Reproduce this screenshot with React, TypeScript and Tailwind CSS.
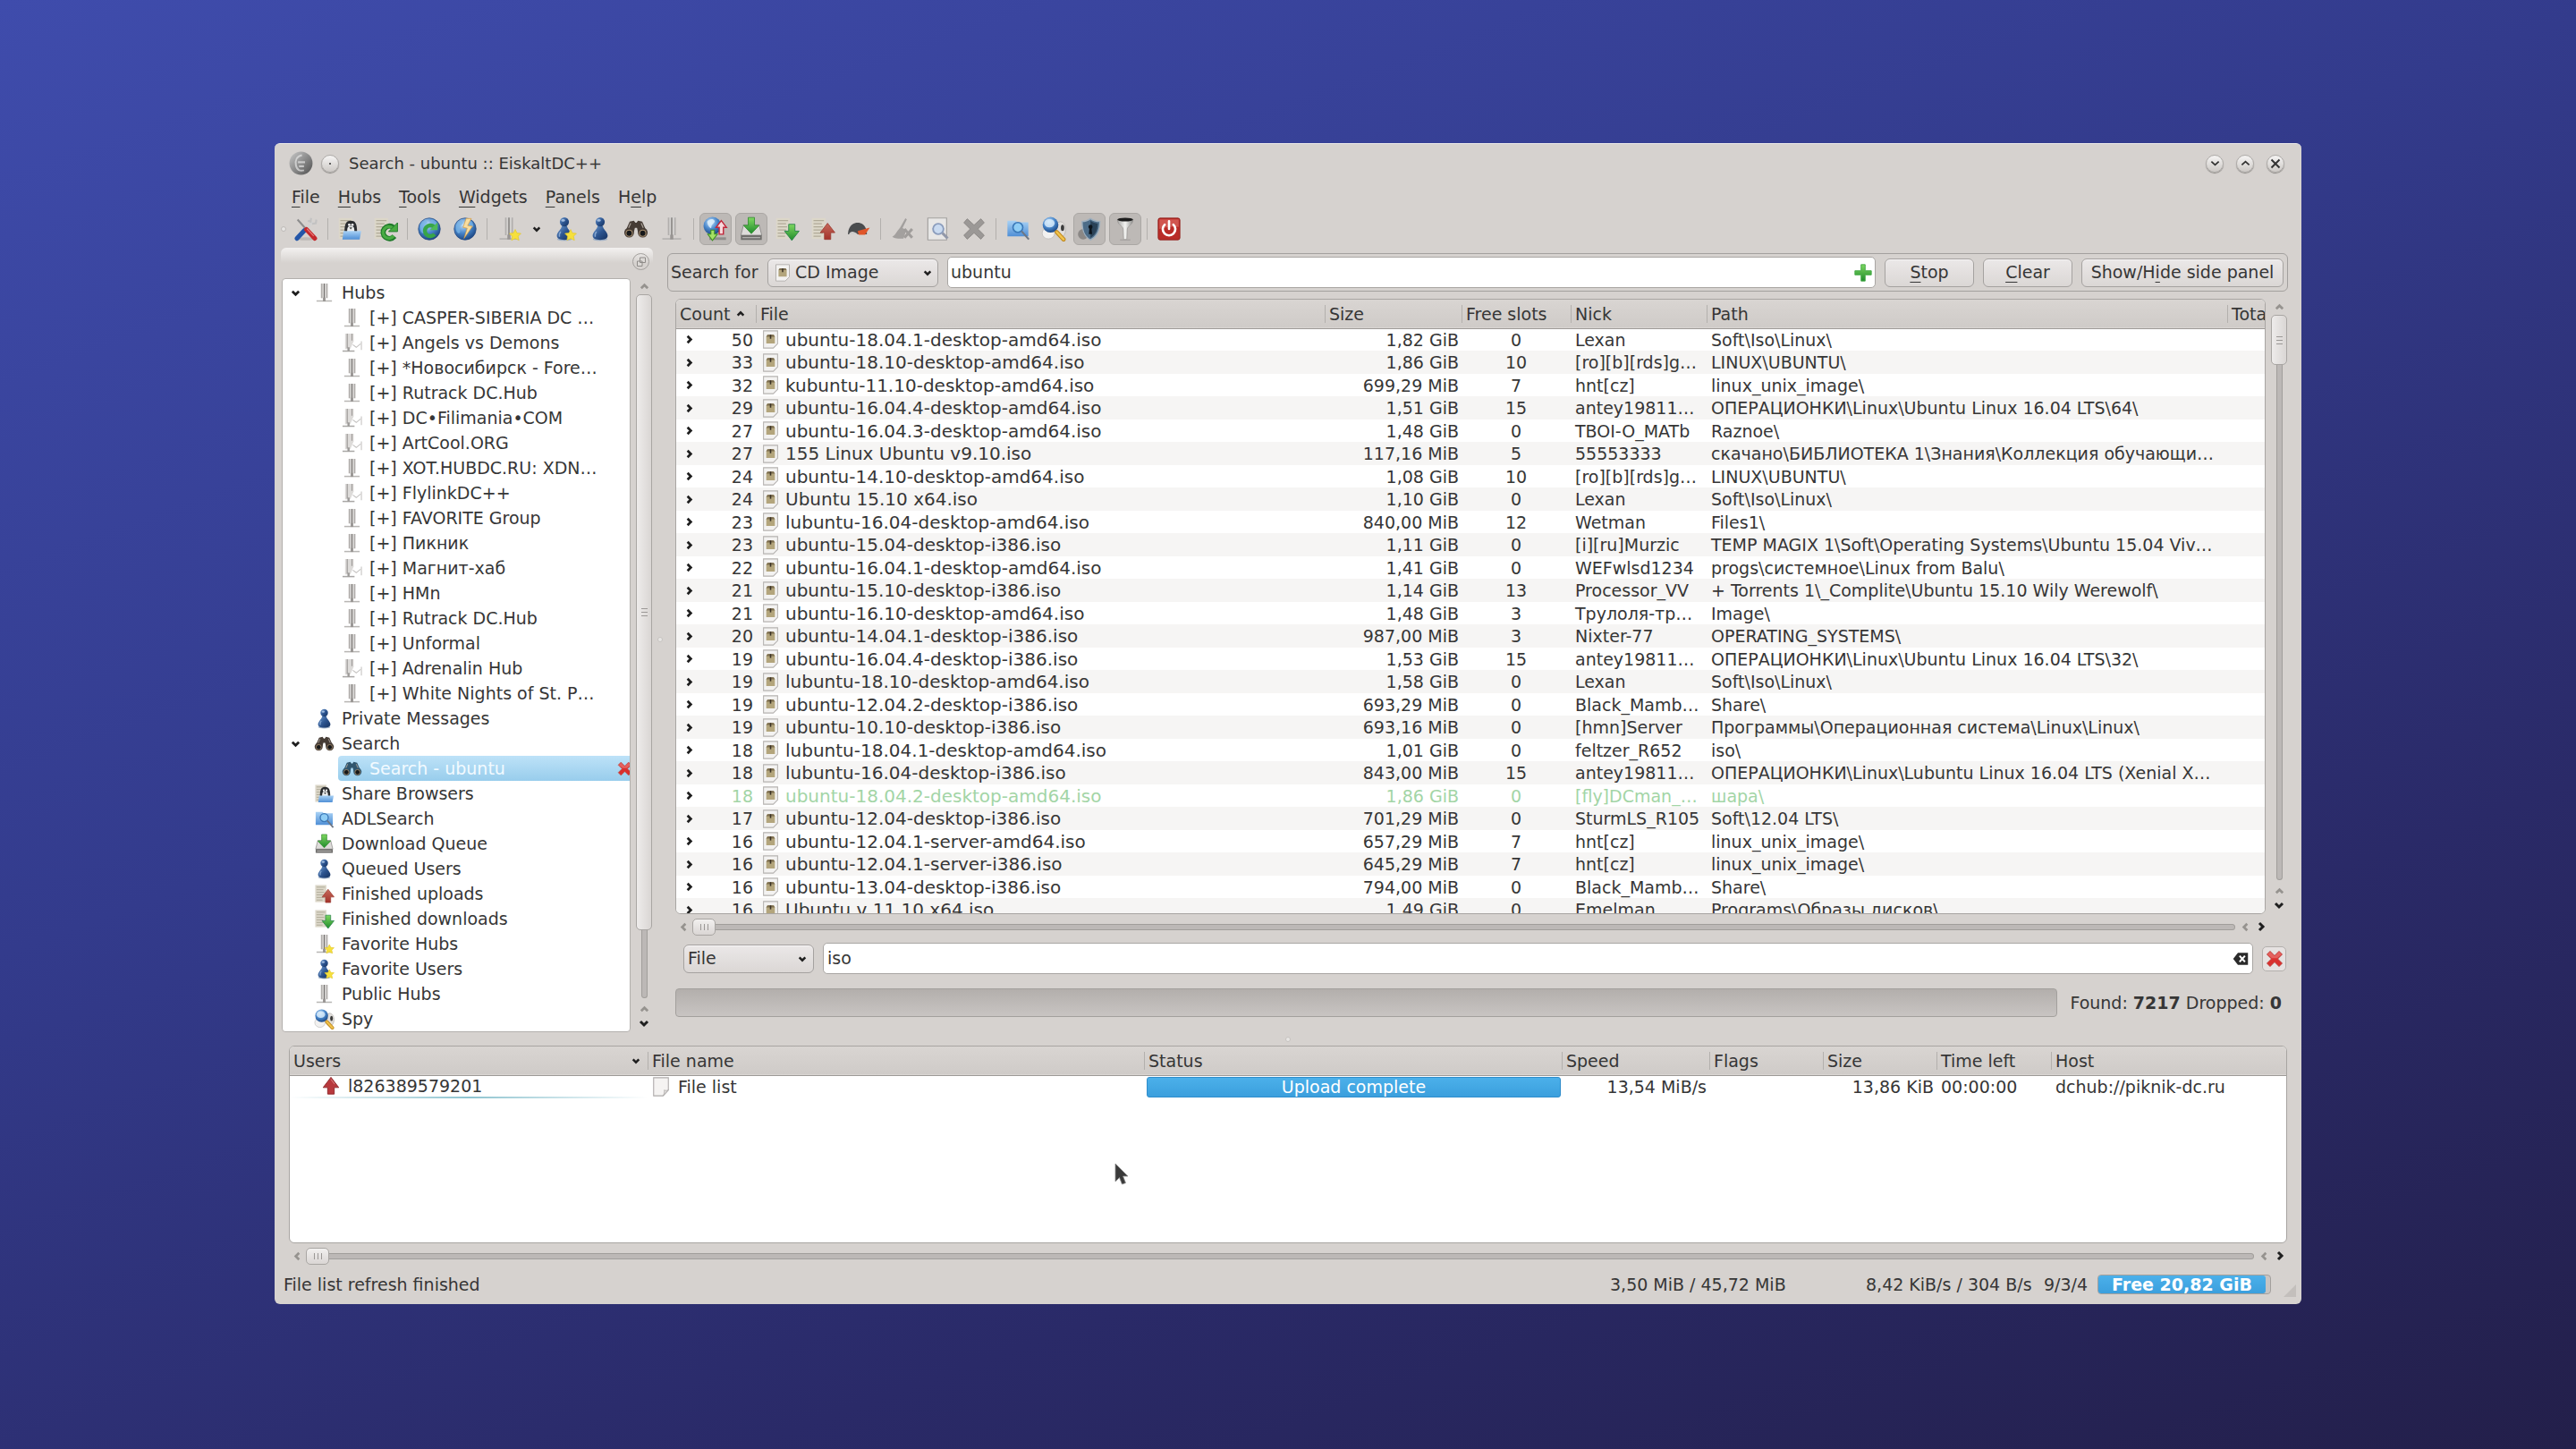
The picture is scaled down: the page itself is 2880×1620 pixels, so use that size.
import type { ReactNode } from 'react'

type IconProps = { className?: string }

function Svg({ className = 'size-[28px]', children }: { className?: string; children: ReactNode }) {
  return (
    <svg viewBox="0 0 24 24" fill="none" aria-hidden="true" className={`shrink-0 ${className}`}>
      {children}
    </svg>
  )
}

// Gradients shared by all icons
function IconDefs() {
  return (
    <svg width="0" height="0" className="absolute" aria-hidden="true">
      <defs>
        <radialGradient id="globe" cx="0.4" cy="0.3" r="0.75">
          <stop offset="0" stopColor="#c4e2fa" />
          <stop offset="0.5" stopColor="#4a88cc" />
          <stop offset="1" stopColor="#16407c" />
        </radialGradient>
        <linearGradient id="pawn" x1="0" y1="0" x2="1" y2="1">
          <stop offset="0" stopColor="#6f9bd0" />
          <stop offset="0.5" stopColor="#2d5590" />
          <stop offset="1" stopColor="#14305f" />
        </linearGradient>
        <linearGradient id="green" x1="0" y1="0" x2="0" y2="1">
          <stop offset="0" stopColor="#7fd860" />
          <stop offset="1" stopColor="#1f8a2c" />
        </linearGradient>
        <linearGradient id="red" x1="0" y1="0" x2="0" y2="1">
          <stop offset="0" stopColor="#c66a5c" />
          <stop offset="1" stopColor="#a3322a" />
        </linearGradient>
        <linearGradient id="steel" x1="0" y1="0" x2="1" y2="0">
          <stop offset="0" stopColor="#a4a4a2" />
          <stop offset="0.5" stopColor="#f4f4f2" />
          <stop offset="1" stopColor="#8c8c8a" />
        </linearGradient>
        <linearGradient id="folder" x1="0" y1="0" x2="0" y2="1">
          <stop offset="0" stopColor="#a9d2f5" />
          <stop offset="1" stopColor="#4f8fd6" />
        </linearGradient>
        <linearGradient id="ball" x1="0" y1="0" x2="1" y2="1">
          <stop offset="0" stopColor="#c9c9c9" />
          <stop offset="1" stopColor="#4e4e4e" />
        </linearGradient>
      </defs>
    </svg>
  )
}

const Star = () => (
  <path d="M18 12.5l1.7 3.4 3.8.4-2.7 2.7.8 3.8-3.6-1.6-3.5 1.6.6-3.8-2.6-2.7 3.8-.4z" fill="#f6e03c" stroke="#e3c72e" strokeWidth=".6" />
)

const Sheet = () => (
  <>
    <path d="M1.5 1.5h13v20h-13z" fill="#dcd7c9" />
    <path d="M3 4h10M3 7h8M3 10h9M3 13h8M3 16h9M3 19h7" stroke="#b0aa98" strokeWidth="1" />
  </>
)

const ToolsIcon = (p: IconProps) => (
  <Svg {...p}>
    <ellipse cx="12" cy="21.5" rx="9" ry="1.5" fill="#bdb9b6" />
    <path d="M4 3l9 10" stroke="#8d8d8d" strokeWidth="1.8" />
    <path d="M18.5 5L10 15" stroke="#d2d2d2" strokeWidth="2.6" />
    <path d="M14 4l2.5 1L17 1.5M18 7l3.5-.5L22 3" stroke="#c2c2c2" strokeWidth="1.8" />
    <path d="M10.5 13.5L3.5 21" stroke="#2456a8" strokeWidth="4.4" strokeLinecap="round" />
    <path d="M12.5 12.5L20.5 21" stroke="#c4282c" strokeWidth="4.4" strokeLinecap="round" />
    <path d="M13 11.8l6.5 7" stroke="#ea7a78" strokeWidth="1" />
  </Svg>
)

const ShareIcon = (p: IconProps) => (
  <Svg {...p}>
    <Sheet />
    <path d="M7 15c0-7 1-11 6-11s6 4 6 11z" fill="#2b2d30" />
    <path d="M9.5 15c0-5 1-6 3.5-6s3.5 1 3.5 6z" fill="#eceeee" />
    <circle cx="11.5" cy="8" r="1.2" fill="#fff" />
    <circle cx="14.6" cy="8" r="1.2" fill="#fff" />
    <path d="M11.5 10.5h3l-1.5 2z" fill="#444" />
    <path d="M6 14h17l-1.5 8H5z" fill="url(#folder)" />
  </Svg>
)

const RefreshShareIcon = (p: IconProps) => (
  <Svg {...p}>
    <Sheet />
    <path d="M20.5 19a6 6 0 1 1-1-8.5" stroke="#1f7a2a" strokeWidth="5" />
    <path d="M19.8 18.6a5.6 5.6 0 1 1-.8-7.4" stroke="#48ab42" strokeWidth="2.8" />
    <path d="M23.5 6v8.5H15z" fill="#48ab42" stroke="#1f7a2a" strokeWidth=".8" />
  </Svg>
)

const GlobeBase = () => (
  <>
    <circle cx="12" cy="12" r="10.5" fill="url(#globe)" stroke="#27497f" strokeWidth=".6" />
    <path d="M4 7c3-4 6-3 6-1s-3 2-3 5 1 5-1 5-4-5-2-9zM14 3c4 0 6 4 6 6s-4 1-5-1-2-4-1-5z" fill="#79b4e6" opacity=".75" />
  </>
)

const GlobeRefreshIcon = (p: IconProps) => (
  <Svg {...p}>
    <GlobeBase />
    <path d="M17 17a5.2 5.2 0 1 1-.4-7" stroke="#37a548" strokeWidth="3.8" />
    <path d="M20 5.5V13h-7.500z" fill="#4fb95a" />
  </Svg>
)

const GlobeBoltIcon = (p: IconProps) => (
  <Svg {...p}>
    <GlobeBase />
    <path d="M13 2l-3 8.5 4 .8L11 21l8-11.5-4.600-.8L18 2z" fill="#f7dda0" stroke="#d89c40" strokeWidth=".6" />
  </Svg>
)

const TowerBase = () => (
  <>
    <path d="M3 21.5h18" stroke="#b8b6b4" strokeWidth="1.6" />
    <path d="M8 1h8v17H8z" fill="#d4d2d0" />
    <path d="M9 1v17M15.2 1v17" stroke="#b2afad" strokeWidth="1.4" />
    <path d="M12 1v17" stroke="#757270" strokeWidth="1.1" />
    <path d="M12 17.500v4.500" stroke="#989593" strokeWidth="3" />
  </>
)

const TowerIcon = (p: IconProps) => (
  <Svg {...p}>
    <TowerBase />
  </Svg>
)

const TowerStarIcon = (p: IconProps) => (
  <Svg {...p}>
    <TowerBase />
    <Star />
  </Svg>
)

const TowerSignalIcon = (p: IconProps) => (
  <Svg {...p}>
    <path d="M4 1h10v9l-4 9H4z" fill="#dddbd9" />
    <path d="M6.5 1v17M12 1v8" stroke="#a19e9c" strokeWidth="1.3" />
    <path d="M1 21.5h14" stroke="#a9a7a5" strokeWidth="1.6" />
    <path d="M8 17v4.500" stroke="#9c9a98" strokeWidth="2.5" />
    <path d="M23 10v10M22 13l-5 4-4-3" stroke="#c4c2c0" strokeWidth="1.1" />
  </Svg>
)

const PawnBase = () => (
  <>
    <ellipse cx="12" cy="21.8" rx="7" ry="1.6" fill="#9fb0c6" />
    <path d="M9.5 9h5c0 3 4.7 6 4.700 9.500 0 2.600-2.700 4-7.200 4s-7.200-1.400-7.200-4C4.800 15 9.500 12 9.500 9z" fill="url(#pawn)" />
    <circle cx="12" cy="5.200" r="4.400" fill="url(#pawn)" />
    <ellipse cx="10.800" cy="3.800" rx="1.800" ry="1.200" fill="#b8d0ee" opacity=".8" />
    <path d="M8.500 14.500c-1.300 1.500-1.700 3-1.200 5" stroke="#86a7d2" strokeWidth="1.200" />
  </>
)

const PawnIcon = (p: IconProps) => (
  <Svg {...p}>
    <PawnBase />
  </Svg>
)

const PawnStarIcon = (p: IconProps) => (
  <Svg {...p}>
    <PawnBase />
    <Star />
  </Svg>
)

const BinocularsIcon = ({ className, tint = '#463c35' }: IconProps & { tint?: string }) => (
  <Svg className={className}>
    <path d="M6 5l4-1 1.500 2h1L14 4l4 1 4.500 10H14l-1-4h-2l-1 4H1.500z" fill={tint} />
    <circle cx="5.500" cy="15.500" r="4.700" fill={tint} />
    <circle cx="18.500" cy="15.500" r="4.700" fill={tint} />
    <circle cx="5.500" cy="16" r="3" fill="#16181a" stroke="#a58c6c" strokeWidth=".9" />
    <circle cx="18.500" cy="16" r="3" fill="#16181a" stroke="#a58c6c" strokeWidth=".9" />
    <path d="M7 6.500L5 11M17 6.500l2 4.500" stroke="#a8a098" strokeWidth="1" />
  </Svg>
)

const TransfersIcon = (p: IconProps) => (
  <Svg {...p}>
    <path d="M6 20h16v2.500H6z" fill="#8f8d8b" />
    <circle cx="9" cy="9" r="8.500" fill="url(#globe)" />
    <path d="M4 5c2-3 6-3 7-1s-3 3-3 6-4-1-4-5z" fill="#e0f1fc" opacity=".85" />
    <path d="M17.500 4l5 6.500h-3V17h-4v-6.500h-3z" fill="#f6d9dc" stroke="#c2263a" strokeWidth="1.200" />
    <path d="M7.500 13H11v4h2.800L9 23l-4.500-6h3z" fill="#a6e065" stroke="#3f8f22" strokeWidth=".9" />
  </Svg>
)

const DownloadIcon = (p: IconProps) => (
  <Svg {...p}>
    <path d="M4.500 8h15L22 18H2z" fill="#dedcda" stroke="#8e8c8a" strokeWidth=".8" />
    <path d="M2 18h20v4.500H2z" fill="#6f6e6c" />
    <path d="M3.500 20.300h17" stroke="#b9b7b5" strokeWidth="1" />
    <path d="M9 1h6v7.500h4.500L12 16.500 4.500 8.500H9z" fill="url(#green)" stroke="#2f8a2c" strokeWidth=".7" />
  </Svg>
)

const FinishedDownIcon = (p: IconProps) => (
  <Svg {...p}>
    <Sheet />
    <path d="M13.500 7.500h6V14h4L16.500 23 9.500 14h4z" fill="url(#green)" stroke="#1e7a45" strokeWidth=".7" />
  </Svg>
)

const FinishedUpIcon = (p: IconProps) => (
  <Svg {...p}>
    <Sheet />
    <path d="M16.500 6.500l7 9h-4V22h-6v-6.500h-4z" fill="url(#red)" stroke="#9a3a30" strokeWidth=".7" />
  </Svg>
)

const UploadIcon = (p: IconProps) => (
  <Svg {...p}>
    <path d="M12 1.500L21.500 14H16v8H8v-8H2.500z" fill="#b8393d" stroke="#8c2529" strokeWidth="1" />
    <path d="M12 4l4.500 6" stroke="#e08a8a" strokeWidth="1" />
  </Svg>
)

const GaugeIcon = (p: IconProps) => (
  <Svg {...p}>
    <path d="M1 17.500C1 10 5.500 5.500 11 5.500s9.500 4.500 9.500 12z" fill="#4a4c4e" />
    <path d="M2 17.500c1.500-3.500 5-3.500 9 0z" fill="#cfcdcb" />
    <path d="M23.500 10.500L11 14l1 4h6.500z" fill="#e0562a" />
  </Svg>
)

const BroomIcon = (p: IconProps) => (
  <Svg {...p}>
    <path d="M15 1l1.500 1-4.500 9 4 2-3 9C8 22 3 21.500 1.500 20 5 18 7 13 9.500 10.500z" fill="#a3a09e" />
    <path d="M14 12l8 9M22 12l-8 9" stroke="#a09d9b" strokeWidth="2.800" />
  </Svg>
)

const PageFindIcon = (p: IconProps) => (
  <Svg {...p}>
    <path d="M2 1.500h18v21H2z" fill="#e8e7e6" stroke="#a3a19f" strokeWidth="1" />
    <circle cx="12" cy="12" r="5" fill="#c9daf0" stroke="#8a9cbc" strokeWidth="1.600" />
    <path d="M16 16l5 5" stroke="#9298a8" strokeWidth="2.600" />
  </Svg>
)

const GrayCrossIcon = (p: IconProps) => (
  <Svg {...p}>
    <path d="M5 1.500L12 8l7-6.500 3.500 4L16 12l6.500 6.500-3.500 4-7-6.500-7 6.500-3.500-4L8 12 1.500 5.500z" fill="#9b9896" stroke="#868381" strokeWidth=".8" />
  </Svg>
)

const FolderFindIcon = (p: IconProps) => (
  <Svg {...p}>
    <path d="M2 4h8l1.500 1.500H22V19H2z" fill="url(#folder)" />
    <circle cx="12" cy="10.500" r="4.700" fill="#8fcdf5" stroke="#3a78b8" strokeWidth="1.400" />
    <path d="M15.500 14l7 8" stroke="#6d7684" strokeWidth="1.800" />
  </Svg>
)

const SpyIcon = (p: IconProps) => (
  <Svg {...p}>
    <ellipse cx="7" cy="16" rx="6" ry="5.500" fill="#f2f1f0" stroke="#bfbdbb" strokeWidth=".7" />
    <ellipse cx="18.500" cy="12.500" rx="5" ry="7.500" fill="#e2dfdc" stroke="#b6b3b0" strokeWidth=".7" />
    <ellipse cx="20.500" cy="11" rx="1.600" ry="3" fill="#3b3b3b" />
    <circle cx="9" cy="8" r="7.500" fill="url(#globe)" />
    <ellipse cx="8" cy="6.500" rx="5" ry="4" fill="#dceefb" opacity=".8" />
    <path d="M15 15l6.500 7" stroke="#c08a1e" strokeWidth="4" strokeLinecap="round" />
    <path d="M15 15l6.500 7" stroke="#f1c34c" strokeWidth="2.200" strokeLinecap="round" />
  </Svg>
)

const ShieldIcon = (p: IconProps) => (
  <Svg {...p}>
    <ellipse cx="6" cy="17" rx="5" ry="5" fill="#8b8886" />
    <path d="M13 2c2.500 2 5.500 2.800 9 2.800C22 13 20 19 13 22.500 6.500 19 5 13 5 4.800c3 0 5.500-.8 8-2.800z" fill="#4c6c88" stroke="#9fb0bf" strokeWidth="1.200" />
    <path d="M13 4v16.500c5-3 6.700-7.500 6.900-13.700C17.500 6.500 15 5.500 13 4z" fill="#2a4258" />
    <circle cx="13" cy="10" r="2" fill="#0d151d" />
    <path d="M12 11h2l.6 6h-3.200z" fill="#0d151d" />
  </Svg>
)

const FunnelIcon = (p: IconProps) => (
  <Svg {...p}>
    <path d="M4.500 3h15c0 5-5.200 6-5.500 9l-.5 10h-3L10 12c-.3-3-5.500-4-5.500-9z" fill="url(#steel)" stroke="#8f8c8a" strokeWidth=".5" />
    <ellipse cx="12" cy="3" rx="7.500" ry="1.800" fill="#1c1c1c" />
    <path d="M7 22.500h10" stroke="#a4a19f" strokeWidth="1" />
  </Svg>
)

const PowerIcon = (p: IconProps) => (
  <Svg {...p}>
    <rect x=".8" y=".8" width="22.400" height="22.400" rx="2" fill="#b92b27" stroke="#8e1d1a" strokeWidth=".8" />
    <path d="M2 2h20v8C15 9 8 10 2 12z" fill="#dc6a62" opacity=".7" />
    <path d="M7.500 7.500a6.500 6.500 0 1 0 9 0M12 4v8" stroke="#fff" strokeWidth="2.400" strokeLinecap="round" />
  </Svg>
)

const CdFileIcon = (p: IconProps) => (
  <Svg {...p}>
    <path d="M3 1h18v16.500L15.500 23H3z" fill="#f3f2f1" stroke="#b5b2b0" strokeWidth="1.200" />
    <path d="M6.500 8.500L8 6h8l1.500 2.500V17h-11z" fill="#b3a57c" />
    <path d="M6.500 8.500L8 6h8l1.500 2.500z" fill="#7d6e4f" />
    <path d="M12 6v5" stroke="#3a3226" strokeWidth="1.800" />
  </Svg>
)

const BlankFileIcon = (p: IconProps) => (
  <Svg {...p}>
    <path d="M3 1h18v15l-6.500 7H3z" fill="#f5f3f2" stroke="#aeabaa" strokeWidth="1.200" />
    <path d="M21 16c-2 1-4 .5-5 0 0 3 0 5-1.500 7z" fill="#dedbd9" stroke="#aeabaa" strokeWidth=".8" />
  </Svg>
)

const RedCrossIcon = (p: IconProps) => (
  <Svg {...p}>
    <path d="M6 1.500l6 6 6-6L22.500 6l-6 6 6 6-4.500 4.500-6-6-6 6L1.500 18l6-6-6-6z" fill="#d9302e" stroke="#b06a66" strokeWidth=".8" />
    <path d="M6 2.500l6 6 6-6L21.500 6l-6 5h-7l-6-5z" fill="#ec8a86" opacity=".55" />
  </Svg>
)

const PlusIcon = (p: IconProps) => (
  <Svg {...p}>
    <path d="M9.500 2h5v7.500H22v5h-7.500V22h-5v-7.500H2v-5h7.500z" fill="url(#green)" stroke="#43aa45" strokeWidth="1" strokeLinejoin="round" />
  </Svg>
)

const ClearTextIcon = (p: IconProps) => (
  <Svg {...p}>
    <path d="M1 12l7-9h15v18H8z" fill="#2a2a2a" />
    <path d="M10.500 7.500l8 9M18.500 7.500l-8 9" stroke="#fff" strokeWidth="2.800" />
  </Svg>
)

const chevrons = {
  up: 'M4 16l8-8 8 8',
  down: 'M4 8l8 8 8-8',
  left: 'M16 4l-8 8 8 8',
  right: 'M8 4l8 8-8 8',
}

function Chevron({ dir, className = 'size-[12px] text-[#1f1f1f]' }: { dir: keyof typeof chevrons; className?: string }) {
  return (
    <Svg className={className}>
      <path d={chevrons[dir]} stroke="currentColor" strokeWidth="6" />
    </Svg>
  )
}

const dimArrow = 'size-[11px] text-[#96938f]'
const darkArrow = 'size-[12px] text-[#1f1f1f]'

function VScroll({ label, handle }: { label: string; handle: string }) {
  return (
    <div role="group" aria-label={label} className="flex w-[18px] shrink-0 flex-col items-center">
      <button type="button" aria-label="Up" className="flex h-[18px] items-center"><Chevron dir="up" className={dimArrow} /></button>
      <div className={`flex w-[18px] shrink-0 flex-col items-center justify-center gap-[3px] rounded-[5px] border border-[#a9a6a3] bg-gradient-to-r from-[#eeeceb] to-[#dad6d4] ${handle}`}>
        <span className="h-px w-[7px] bg-[#9b9896]" />
        <span className="h-px w-[7px] bg-[#9b9896]" />
        <span className="h-px w-[7px] bg-[#9b9896]" />
      </div>
      <div className="w-[7px] flex-1 rounded-b-[4px] border border-t-0 border-[#a19e9b] bg-[#bcb8b6]" />
      <button type="button" aria-label="Page up" className="flex h-[18px] items-end"><Chevron dir="up" className={dimArrow} /></button>
      <button type="button" aria-label="Down" className="flex h-[20px] items-center"><Chevron dir="down" className={darkArrow} /></button>
    </div>
  )
}

function HScroll({ label }: { label: string }) {
  return (
    <div role="group" aria-label={label} className="flex h-[28px] items-center">
      <button type="button" aria-label="Left" className="flex w-[19px] justify-center"><Chevron dir="left" className={dimArrow} /></button>
      <div className="flex h-[19px] w-[26px] items-center justify-center gap-[3px] rounded-[5px] border border-[#a9a6a3] bg-gradient-to-b from-[#f2f0ef] to-[#dad6d4]">
        <span className="h-[7px] w-px bg-[#9b9896]" />
        <span className="h-[7px] w-px bg-[#9b9896]" />
        <span className="h-[7px] w-px bg-[#9b9896]" />
      </div>
      <div className="mr-[3px] h-[7px] flex-1 rounded-r-[4px] border border-l-0 border-[#a19e9b] bg-[#bcb8b6]" />
      <button type="button" aria-label="Page left" className="flex w-[17px] justify-center"><Chevron dir="left" className={dimArrow} /></button>
      <button type="button" aria-label="Right" className="flex w-[17px] justify-center"><Chevron dir="right" className={darkArrow} /></button>
    </div>
  )
}

const menus = [
  ['', 'F', 'ile'],
  ['', 'H', 'ubs'],
  ['', 'T', 'ools'],
  ['', 'W', 'idgets'],
  ['', 'P', 'anels'],
  ['H', 'e', 'lp'],
]

function Accel({ parts }: { parts: string[] }) {
  return (
    <span>
      {parts[0]}
      <span className="underline decoration-1 underline-offset-4">{parts[1]}</span>
      {parts[2]}
    </span>
  )
}

const Separator = () => <div className="mx-[2px] h-[24px] w-px bg-[#b3b0ad]" />

function ToolButton({ label, on, children }: { label: string; on?: boolean; children: ReactNode }) {
  return (
    <button
      type="button"
      aria-label={label}
      aria-pressed={on}
      className={`flex size-[36px] shrink-0 items-center justify-center rounded-[6px] border ${on ? 'border-[#aaa7a4] bg-[#bdb9b6]' : 'border-transparent'}`}
    >
      {children}
    </button>
  )
}

function Toolbar() {
  return (
    <div role="toolbar" aria-label="Main toolbar" className="flex h-[38px] items-center gap-1 pl-[7px]">
      <span className="size-[6px] rounded-full border border-[#bdbab7] bg-[#e8e6e4]" />
      <ToolButton label="Preferences"><ToolsIcon /></ToolButton>
      <Separator />
      <ToolButton label="Open file list"><ShareIcon /></ToolButton>
      <ToolButton label="Refresh share"><RefreshShareIcon /></ToolButton>
      <Separator />
      <ToolButton label="Reconnect"><GlobeRefreshIcon className="size-[28px]" /></ToolButton>
      <ToolButton label="Quick connect"><GlobeBoltIcon className="size-[28px]" /></ToolButton>
      <Separator />
      <ToolButton label="Favorite hubs"><TowerStarIcon /></ToolButton>
      <button type="button" aria-label="Favorite hubs menu" className="flex h-[36px] w-[18px] items-center justify-center"><Chevron dir="down" className="size-[10px] text-[#1f1f1f]" /></button>
      <ToolButton label="Favorite users"><PawnStarIcon /></ToolButton>
      <ToolButton label="Private messages"><PawnIcon /></ToolButton>
      <ToolButton label="Search"><BinocularsIcon /></ToolButton>
      <ToolButton label="Public hubs"><TowerIcon /></ToolButton>
      <Separator />
      <ToolButton label="Transfers" on><TransfersIcon /></ToolButton>
      <ToolButton label="Download queue" on><DownloadIcon /></ToolButton>
      <ToolButton label="Finished downloads"><FinishedDownIcon /></ToolButton>
      <ToolButton label="Finished uploads"><FinishedUpIcon /></ToolButton>
      <ToolButton label="Speed limits"><GaugeIcon className="size-[26px]" /></ToolButton>
      <Separator />
      <ToolButton label="Clear chat"><BroomIcon className="size-[26px]" /></ToolButton>
      <ToolButton label="Find in chat"><PageFindIcon /></ToolButton>
      <ToolButton label="Close"><GrayCrossIcon className="size-[26px]" /></ToolButton>
      <Separator />
      <ToolButton label="ADLSearch"><FolderFindIcon /></ToolButton>
      <ToolButton label="Spy"><SpyIcon /></ToolButton>
      <ToolButton label="Antispam" on><ShieldIcon /></ToolButton>
      <ToolButton label="IP filter" on><FunnelIcon className="size-[28px]" /></ToolButton>
      <Separator />
      <ToolButton label="Quit"><PowerIcon className="size-[26px]" /></ToolButton>
    </div>
  )
}

const hubs: { name: string; signal?: boolean }[] = [
  { name: 'CASPER-SIBERIA DC …' },
  { name: 'Angels vs Demons', signal: true },
  { name: '*Новосибирск - Fore…' },
  { name: 'Rutrack DC.Hub' },
  { name: 'DC•Filimania•COM', signal: true },
  { name: 'ArtCool.ORG', signal: true },
  { name: 'XOT.HUBDC.RU: XDN…' },
  { name: 'FlylinkDC++', signal: true },
  { name: 'FAVORITE Group' },
  { name: 'Пикник' },
  { name: 'Магнит-хаб', signal: true },
  { name: 'HMn' },
  { name: 'Rutrack DC.Hub' },
  { name: 'Unformal' },
  { name: 'Adrenalin Hub', signal: true },
  { name: 'White Nights of St. P…' },
]

const sections = [
  { name: 'Share Browsers', Icon: ShareIcon },
  { name: 'ADLSearch', Icon: FolderFindIcon },
  { name: 'Download Queue', Icon: DownloadIcon },
  { name: 'Queued Users', Icon: PawnIcon },
  { name: 'Finished uploads', Icon: FinishedUpIcon },
  { name: 'Finished downloads', Icon: FinishedDownIcon },
  { name: 'Favorite Hubs', Icon: TowerStarIcon },
  { name: 'Favorite Users', Icon: PawnStarIcon },
  { name: 'Public Hubs', Icon: TowerIcon },
  { name: 'Spy', Icon: SpyIcon },
]

const treeIcon = 'size-[23px]'

function TreeRow({ icon, open, children }: { icon: ReactNode; open?: boolean; children: ReactNode }) {
  return (
    <li className="flex h-[28px] items-center gap-[8px] pl-[9px]">
      <span className="mr-[5px] w-[13px]">{open && <Chevron dir="down" className="size-[11px] text-[#1f1f1f]" />}</span>
      {icon}
      {children}
    </li>
  )
}

function Dock() {
  return (
    <aside className="flex w-[416px] shrink-0 flex-col pt-[2px]">
      <div className="flex h-[34px] justify-end rounded-t-[6px] bg-gradient-to-b from-[#f3f1f0] to-[#d6d2cf] to-50% pr-[4px] pt-[6px]">
        <button type="button" aria-label="Float panel" className="flex size-[19px] items-center justify-center rounded-full border border-[#a3a09d]">
          <Svg className="size-[12px]">
            <path d="M9 2h12v11H9zM3 10h11v11H3z" stroke="#8e8b88" strokeWidth="2" fill="#dcd9d6" />
          </Svg>
        </button>
      </div>
      <div className="flex gap-[6px] pl-px">
        <ul className="w-[390px] overflow-hidden rounded-[4px] border border-[#b3b0ad] bg-white pt-px">
          <TreeRow open icon={<TowerIcon className={treeIcon} />}>Hubs</TreeRow>
          {hubs.map((hub, i) => (
            <li key={i} className="flex h-[28px] items-center gap-[8px] pl-[66px]">
              {hub.signal ? <TowerSignalIcon className={treeIcon} /> : <TowerIcon className={treeIcon} />}
              <span className="whitespace-nowrap">[+] {hub.name}</span>
            </li>
          ))}
          <TreeRow icon={<PawnIcon className={treeIcon} />}>Private Messages</TreeRow>
          <TreeRow open icon={<BinocularsIcon className={treeIcon} />}>Search</TreeRow>
          <li className="ml-[62px] flex h-[28px] items-center gap-[8px] rounded-l-[4px] bg-gradient-to-b from-[#bde2f8] to-[#98cdec] pl-[4px] text-[#f2faff]">
            <BinocularsIcon className={treeIcon} tint="#31566e" />
            <span className="flex-1">Search - ubuntu</span>
            <button type="button" aria-label="Close tab" className="-mr-[3px]"><RedCrossIcon className="size-[17px]" /></button>
          </li>
          {sections.map(({ name, Icon }) => (
            <TreeRow key={name} icon={<Icon className={treeIcon} />}>{name}</TreeRow>
          ))}
        </ul>
        <VScroll label="Scroll tree" handle="h-[711px]" />
      </div>
    </aside>
  )
}

const buttonClass = 'h-[32px] rounded-[6px] border border-[#a5a2a0] bg-gradient-to-b from-[#ebe8e8] to-[#dbd7d5] shadow-[inset_0_1px_0_#f7f5f5]'

function SearchBar() {
  return (
    <div className="flex h-[43px] items-center rounded-[6px] border border-[#a3a09e] pl-[3px] pr-[4px]">
      <label htmlFor="search-type" className="w-[108px] whitespace-nowrap">Search for</label>
      <div className={`flex w-[191px] items-center pl-[6px] pr-[6px] ${buttonClass}`}>
        <CdFileIcon className="size-[20px]" />
        <select id="search-type" className="ml-[4px] flex-1 appearance-none bg-transparent outline-none">
          <option>CD Image</option>
        </select>
        <Chevron dir="down" className="size-[10px] text-[#1f1f1f]" />
      </div>
      <div className="ml-[10px] flex h-[35px] flex-1 items-center rounded-[5px] border border-[#a9a6a3] bg-white pl-[3px] pr-[2px]">
        <input type="text" aria-label="Search text" defaultValue="ubuntu" className="min-w-0 flex-1 outline-none" />
        <button type="button" aria-label="Add to history"><PlusIcon className="size-[22px]" /></button>
      </div>
      <button type="button" className={`ml-[10px] w-[100px] ${buttonClass}`}><Accel parts={['', 'S', 'top']} /></button>
      <button type="button" className={`ml-[10px] w-[100px] ${buttonClass}`}><Accel parts={['', 'C', 'lear']} /></button>
      <button type="button" className={`ml-[10px] w-[226px] whitespace-nowrap ${buttonClass}`}><Accel parts={['Show/H', 'i', 'de side panel']} /></button>
    </div>
  )
}

type Result = [count: number, file: string, size: string, slots: number, nick: string, path: string]

const results: Result[] = [
  [50, 'ubuntu-18.04.1-desktop-amd64.iso', '1,82 GiB', 0, 'Lexan', 'Soft\\Iso\\Linux\\'],
  [33, 'ubuntu-18.10-desktop-amd64.iso', '1,86 GiB', 10, '[ro][b][rds]g…', 'LINUX\\UBUNTU\\'],
  [32, 'kubuntu-11.10-desktop-amd64.iso', '699,29 MiB', 7, 'hnt[cz]', 'linux_unix_image\\'],
  [29, 'ubuntu-16.04.4-desktop-amd64.iso', '1,51 GiB', 15, 'antey19811…', 'ОПЕРАЦИОНКИ\\Linux\\Ubuntu Linux 16.04 LTS\\64\\'],
  [27, 'ubuntu-16.04.3-desktop-amd64.iso', '1,48 GiB', 0, 'TBOI-O_MATb', 'Raznoe\\'],
  [27, '155 Linux Ubuntu v9.10.iso', '117,16 MiB', 5, '55553333', 'скачано\\БИБЛИОТЕКА 1\\Знания\\Коллекция обучающи…'],
  [24, 'ubuntu-14.10-desktop-amd64.iso', '1,08 GiB', 10, '[ro][b][rds]g…', 'LINUX\\UBUNTU\\'],
  [24, 'Ubuntu 15.10 x64.iso', '1,10 GiB', 0, 'Lexan', 'Soft\\Iso\\Linux\\'],
  [23, 'lubuntu-16.04-desktop-amd64.iso', '840,00 MiB', 12, 'Wetman', 'Files1\\'],
  [23, 'ubuntu-15.04-desktop-i386.iso', '1,11 GiB', 0, '[i][ru]Murzic', 'TEMP MAGIX 1\\Soft\\Operating Systems\\Ubuntu 15.04 Viv…'],
  [22, 'ubuntu-16.04.1-desktop-amd64.iso', '1,41 GiB', 0, 'WEFwlsd1234', 'progs\\системное\\Linux from Balu\\'],
  [21, 'ubuntu-15.10-desktop-i386.iso', '1,14 GiB', 13, 'Processor_VV', '+ Torrents 1\\_Complite\\Ubuntu 15.10 Wily Werewolf\\'],
  [21, 'ubuntu-16.10-desktop-amd64.iso', '1,48 GiB', 3, 'Трулоля-тр…', 'Image\\'],
  [20, 'ubuntu-14.04.1-desktop-i386.iso', '987,00 MiB', 3, 'Nixter-77', 'OPERATING_SYSTEMS\\'],
  [19, 'ubuntu-16.04.4-desktop-i386.iso', '1,53 GiB', 15, 'antey19811…', 'ОПЕРАЦИОНКИ\\Linux\\Ubuntu Linux 16.04 LTS\\32\\'],
  [19, 'lubuntu-18.10-desktop-amd64.iso', '1,58 GiB', 0, 'Lexan', 'Soft\\Iso\\Linux\\'],
  [19, 'ubuntu-12.04.2-desktop-i386.iso', '693,29 MiB', 0, 'Black_Mamb…', 'Share\\'],
  [19, 'ubuntu-10.10-desktop-i386.iso', '693,16 MiB', 0, '[hmn]Server', 'Программы\\Операционная система\\Linux\\Linux\\'],
  [18, 'lubuntu-18.04.1-desktop-amd64.iso', '1,01 GiB', 0, 'feltzer_R652', 'iso\\'],
  [18, 'lubuntu-16.04-desktop-i386.iso', '843,00 MiB', 15, 'antey19811…', 'ОПЕРАЦИОНКИ\\Linux\\Lubuntu Linux 16.04 LTS (Xenial X…'],
  [18, 'ubuntu-18.04.2-desktop-amd64.iso', '1,86 GiB', 0, '[fly]DCman_…', 'шара\\'],
  [17, 'ubuntu-12.04-desktop-i386.iso', '701,29 MiB', 0, 'SturmLS_R105', 'Soft\\12.04 LTS\\'],
  [16, 'ubuntu-12.04.1-server-amd64.iso', '657,29 MiB', 7, 'hnt[cz]', 'linux_unix_image\\'],
  [16, 'ubuntu-12.04.1-server-i386.iso', '645,29 MiB', 7, 'hnt[cz]', 'linux_unix_image\\'],
  [16, 'ubuntu-13.04-desktop-i386.iso', '794,00 MiB', 0, 'Black_Mamb…', 'Share\\'],
  [16, 'Ubuntu v 11.10 x64.iso', '1,49 GiB', 0, 'Emelman', 'Programs\\Образы дисков\\'],
]

// Files that are already in the share are drawn in green
const sharedFile = 'ubuntu-18.04.2-desktop-amd64.iso'

function HeadCell({ children, first }: { children: ReactNode; first?: boolean }) {
  return (
    <th scope="col" className="overflow-hidden whitespace-nowrap p-0 text-left font-normal">
      <div className={`h-[20px] pl-[4px] leading-[20px] ${first ? '' : 'border-l border-[#b3b0ad]'}`}>{children}</div>
    </th>
  )
}

function ResultsTable() {
  return (
    <div className="h-[688px] min-w-0 flex-1 overflow-hidden rounded-[6px] border border-[#a8a5a2] bg-white">
      <table className="w-full table-fixed border-collapse">
        <colgroup>
          <col className="w-[89px]" />
          <col className="w-[636px]" />
          <col className="w-[153px]" />
          <col className="w-[122px]" />
          <col className="w-[152px]" />
          <col />
          <col className="w-[42px]" />
        </colgroup>
        <thead>
          <tr className="h-[32px] border-b border-[#9d9a97] bg-gradient-to-b from-[#d9d5d2] to-[#cfcbc8]">
            <HeadCell first><span className="flex items-center gap-[7px]">Count <Chevron dir="up" className="size-[10px] text-[#1f1f1f]" /></span></HeadCell>
            <HeadCell>File</HeadCell>
            <HeadCell>Size</HeadCell>
            <HeadCell>Free slots</HeadCell>
            <HeadCell>Nick</HeadCell>
            <HeadCell>Path</HeadCell>
            <HeadCell>Total</HeadCell>
          </tr>
        </thead>
        <tbody>
          {results.map(([count, file, size, slots, nick, path]) => (
            <tr
              key={file}
              className={`whitespace-nowrap leading-[24px] odd:h-[25px] even:h-[26px] even:bg-[#f6f5f4] ${file === sharedFile ? 'text-[#a3d5a6]' : ''}`}
            >
              <td className="p-0">
                <div className="flex items-center justify-between pl-[9px] pr-[3px]">
                  <Chevron dir="right" className="size-[11px] text-[#1f1f1f]" />
                  {count}
                </div>
              </td>
              <td className="p-0">
                <div className="flex items-center gap-[6px] pl-[6px] text-[20px]">
                  <CdFileIcon className="size-[21px]" />
                  {file}
                </div>
              </td>
              <td className="p-0 pr-[3px] text-right">{size}</td>
              <td className="p-0 text-center">{slots}</td>
              <td className="overflow-hidden p-0 pl-[5px]">{nick}</td>
              <td className="overflow-hidden p-0 pl-[5px]">{path}</td>
              <td className="p-0" />
            </tr>
          ))}
        </tbody>
      </table>
    </div>
  )
}

function SearchPanel() {
  return (
    <main className="min-w-0 flex-1 pt-[8px]">
      <SearchBar />
      <div className="mt-[8px] flex gap-[6px] pl-[9px] pr-px">
        <ResultsTable />
        <VScroll label="Scroll results" handle="h-[56px]" />
      </div>
      <div className="pl-[9px] pr-[22px]">
        <HScroll label="Scroll results sideways" />
      </div>
      <div className="mt-[4px] flex items-center pl-[18px] pr-[2px]">
        <div className={`flex w-[146px] items-center pl-[4px] pr-[7px] ${buttonClass}`}>
          <select aria-label="Filter column" className="min-w-0 flex-1 appearance-none bg-transparent outline-none">
            <option>File</option>
          </select>
          <Chevron dir="down" className="size-[10px] text-[#1f1f1f]" />
        </div>
        <div className="ml-[10px] flex h-[35px] flex-1 items-center rounded-[5px] border border-[#a9a6a3] bg-white pl-[4px] pr-[4px]">
          <input type="text" aria-label="Filter" defaultValue="iso" className="min-w-0 flex-1 outline-none" />
          <button type="button" aria-label="Clear filter"><ClearTextIcon className="size-[18px]" /></button>
        </div>
        <button type="button" aria-label="Close filter" className="ml-[10px] flex h-[28px] w-[27px] items-center justify-center rounded-[5px] border border-[#b3b0ad] bg-[#e6e2e1]">
          <RedCrossIcon className="size-[20px]" />
        </button>
      </div>
      <div className="mt-[16px] flex items-center pl-[9px] pr-[7px]">
        <div role="progressbar" aria-label="Search progress" aria-valuenow={0} className="h-[32px] flex-1 rounded-[4px] border border-[#a3a09d] bg-gradient-to-b from-[#b3afac] to-[#c8c4c2]" />
        <span className="w-[251px] whitespace-nowrap text-right">Found: <b>7217</b> Dropped: <b>0</b></span>
      </div>
    </main>
  )
}

function Transfers() {
  return (
    <section aria-label="Transfers" className="relative pl-[16px] pr-[16px]">
      <div className="h-[221px] overflow-hidden rounded-[6px] border border-[#a8a5a2] bg-white">
        <table className="w-full table-fixed border-collapse">
          <colgroup>
            <col className="w-[400px]" />
            <col className="w-[555px]" />
            <col className="w-[467px]" />
            <col className="w-[165px]" />
            <col className="w-[127px]" />
            <col className="w-[127px]" />
            <col className="w-[128px]" />
            <col />
          </colgroup>
          <thead>
            <tr className="h-[32px] border-b border-[#9d9a97] bg-gradient-to-b from-[#d9d5d2] to-[#cfcbc8]">
              <HeadCell first><span className="flex items-center justify-between pr-[8px]">Users <Chevron dir="down" className="size-[10px] text-[#1f1f1f]" /></span></HeadCell>
              <HeadCell>File name</HeadCell>
              <HeadCell>Status</HeadCell>
              <HeadCell>Speed</HeadCell>
              <HeadCell>Flags</HeadCell>
              <HeadCell>Size</HeadCell>
              <HeadCell>Time left</HeadCell>
              <HeadCell>Host</HeadCell>
            </tr>
          </thead>
          <tbody>
            <tr className="h-[25px] whitespace-nowrap leading-[23px]">
              <td className="p-0">
                <div className="flex items-center gap-[8px] pl-[35px]">
                  <UploadIcon className="size-[22px]" />
                  l826389579201
                </div>
                <div className="h-[2px] bg-gradient-to-r from-transparent via-[#8fc4d0] to-transparent" />
              </td>
              <td className="p-0">
                <div className="flex items-center gap-[8px] pl-[4px]">
                  <BlankFileIcon className="size-[22px]" />
                  File list
                </div>
              </td>
              <td className="p-0 pl-[3px] pr-px">
                <div className="h-[23px] rounded-[3px] border border-[#2f8dcb] bg-gradient-to-b from-[#4bb0ea] to-[#3b9fdd] text-center leading-[21px] text-white">
                  Upload complete
                </div>
              </td>
              <td className="p-0 pr-[3px] text-right">13,54 MiB/s</td>
              <td className="p-0" />
              <td className="p-0 pr-[3px] text-right">13,86 KiB</td>
              <td className="p-0 pl-[5px]">00:00:00</td>
              <td className="p-0 pl-[5px]">dchub://piknik-dc.ru</td>
            </tr>
          </tbody>
        </table>
      </div>
      <HScroll label="Scroll transfers sideways" />
      <svg viewBox="0 0 16 26" aria-hidden="true" className="absolute left-[939px] top-[131px] h-[26px] w-[16px]">
        <path d="M1 1v20l4.500-4.500L8.500 24l4-1.500-3-7.500H15z" fill="#3a3a3a" stroke="#8b8b8b" strokeWidth=".8" />
      </svg>
    </section>
  )
}

function StatusBar() {
  return (
    <footer className="flex h-[40px] items-start pl-[10px] pr-[6px] pt-[6px]">
      <span className="flex-1">File list refresh finished</span>
      <span className="w-[286px]">3,50 MiB / 45,72 MiB</span>
      <span className="w-[199px]">8,42 KiB/s / 304 B/s</span>
      <span className="w-[60px]">9/3/4</span>
      <div className="mt-[1px] h-[22px] w-[194px] rounded-[4px] border border-[#a3a09d] bg-[#c8c4c2]">
        <div className="mr-[5px] h-[20px] rounded-[3px] bg-gradient-to-b from-[#4bb0ea] to-[#3b9fdd] text-center font-bold leading-[20px] text-white">Free 20,82 GiB</div>
      </div>
      <svg viewBox="0 0 14 14" aria-hidden="true" className="ml-[14px] mt-[12px] size-[14px]">
        <path d="M14 0v14H0z" fill="#c3bfbc" />
      </svg>
    </footer>
  )
}

const roundButton = 'flex size-[20px] items-center justify-center rounded-full border border-[#aeaba8] bg-gradient-to-b from-[#f6f5f4] to-[#cdc9c6] shadow-[0_1px_1px_#8d8a87]'

function TitleBar() {
  return (
    <header className="flex h-[43px] items-center pl-[16px] pr-[19px]">
      <Svg className="size-[27px]">
        <circle cx="12" cy="12" r="11.500" fill="url(#ball)" />
        <path d="M13 4c-5 1-7 5-6 10s4 6 8 5M9 11h7M10 15h5" stroke="#e4e4e4" strokeWidth="1.800" opacity=".7" />
      </Svg>
      <button type="button" aria-label="Window menu" className={`ml-[9px] ${roundButton}`}>
        <span className="size-[2px] rounded-full bg-[#333]" />
      </button>
      <h1 className="ml-[11px] flex-1 text-[18px]">Search - ubuntu :: EiskaltDC++</h1>
      <div className="flex gap-[14px]">
        <button type="button" aria-label="Minimize" className={roundButton}>
          <Svg className="size-[11px]"><path d="M3 8l9 8 9-8" stroke="#333" strokeWidth="4" /></Svg>
        </button>
        <button type="button" aria-label="Maximize" className={roundButton}>
          <Svg className="size-[11px]"><path d="M3 16l9-8 9 8" stroke="#333" strokeWidth="4" /></Svg>
        </button>
        <button type="button" aria-label="Close window" className={roundButton}>
          <Svg className="size-[12px]"><path d="M3 3l18 18M21 3L3 21" stroke="#333" strokeWidth="4" /></Svg>
        </button>
      </div>
    </header>
  )
}

const Dot = () => <span className="size-[6px] rounded-full border border-[#c6c3c0] bg-[#e8e6e4]" />

export default function App() {
  return (
    <div className="min-h-screen bg-[linear-gradient(160deg,#3f4cac_0%,#333b8c_40%,#2a2a68_72%,#231f4a_100%)] px-[307px] pb-[160px] pt-[160px] font-['DejaVu_Sans',sans-serif] text-[19px] leading-[25px] text-[#363636]">
      <IconDefs />
      <div className="rounded-[6px] border-t border-[#eceae9] bg-[#d6d2cf]">
        <TitleBar />
        <nav className="flex h-[33px] items-center gap-[20px] pl-[19px]">
          {menus.map(parts => (
            <button key={parts[1]} type="button"><Accel parts={parts} /></button>
          ))}
        </nav>
        <Toolbar />
        <div className="flex pl-[7px] pr-[15px]">
          <Dock />
          <div className="flex w-[16px] shrink-0 items-center justify-center"><Dot /></div>
          <SearchPanel />
        </div>
        <div className="flex h-[15px] items-center justify-center"><Dot /></div>
        <Transfers />
        <StatusBar />
      </div>
    </div>
  )
}
